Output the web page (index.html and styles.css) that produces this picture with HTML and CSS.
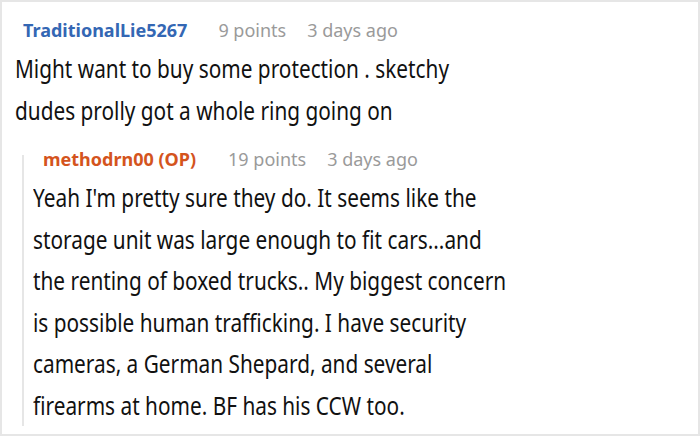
FILE: index.html
```html
<!DOCTYPE html>
<html>
<head>
<meta charset="utf-8">
<link rel="stylesheet" href="styles.css">
</head>
<body>
<div class="thread">
  <div class="comment">
    <div class="meta">
      <span class="user">TraditionalLie5267</span>
      <span class="info">9 points</span>
      <span class="info">3 days ago</span>
    </div>
    <p class="body body-two">Might want to buy some protection . sketchy<br>dudes prolly got a whole ring going on</p>
    <div class="reply">
      <div class="meta">
        <span class="user op">methodrn00 (OP)</span>
        <span class="info">19 points</span>
        <span class="info">3 days ago</span>
      </div>
      <p class="body body-six">Yeah I'm pretty sure they do. It seems like the<br>storage unit was large enough to fit cars...and<br>the renting of boxed trucks.. My biggest concern<br>is possible human trafficking. I have security<br>cameras, a German Shepard, and several<br>firearms at home. BF has his CCW too.</p>
    </div>
  </div>
</div>
</body>
</html>
```
FILE: styles.css
```css
html, body {
  margin: 0;
  padding: 0;
  background: #fff;
}
.thread {
  width: 700px;
  height: 436px;
  box-sizing: border-box;
  border: 2px solid #e6e6e6;
  overflow: hidden;
  font-family: "Noto Sans", "Open Sans", sans-serif;
  color: #111;
}
.comment {
  display: flex;
  flex-direction: column;
  padding: 17px 0 0 13px;
}
.meta {
  display: flex;
  gap: 21px;
  font-size: 18px;
  line-height: 22px;
  padding-left: 8px;
  white-space: nowrap;
}
.user {
  font-weight: bold;
  color: #3467b4;
  margin-right: 10px;
}
.user.op {
  color: #d4541d;
  margin-right: 11px;
}
.info {
  color: #9a9a9a;
}
.body {
  margin: 7px 0 0 0;
  font-size: 20.8px;
  line-height: 34.58px;
  white-space: nowrap;
  transform: scaleY(1.2);
  transform-origin: 0 0;
}
.body-two {
  margin-bottom: 13.83px;
}
.body-six {
  margin-bottom: 41.5px;
}
.reply {
  display: flex;
  flex-direction: column;
  margin-top: 24px;
  margin-left: 7px;
  border-left: 2px solid #e6e6e6;
  padding-left: 9px;
}
.reply .meta {
  margin-top: -7px;
  padding-left: 10px;
}
```
